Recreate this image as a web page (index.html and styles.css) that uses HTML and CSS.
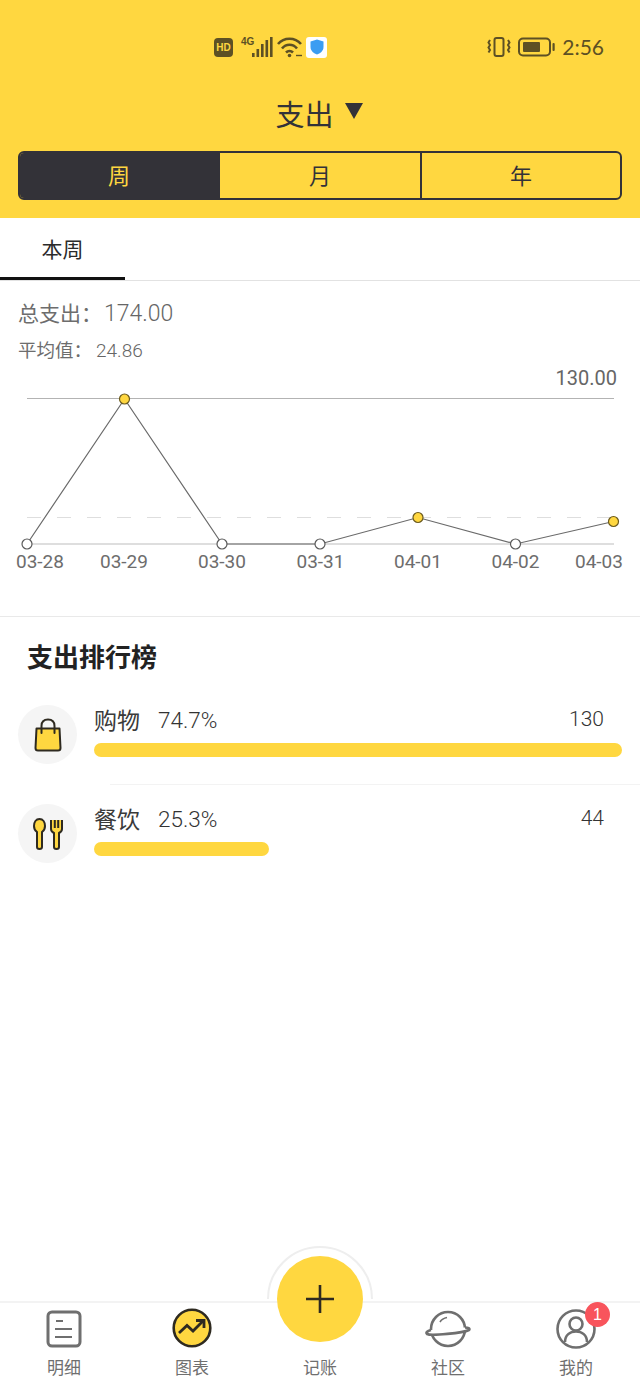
FILE: index.html
```html
<!DOCTYPE html>
<html lang="zh-CN">
<head>
  <meta charset="UTF-8" />
  <meta name="viewport" content="width=device-width, initial-scale=1.0"/>
  <title>支出</title>
  <link rel="stylesheet" href="styles.css">
</head>
<body>
  <header class="top">
    <div class="status">
      <div class="status-left">
        <span class="hd">HD</span>
        <svg class="signal" width="34" height="22" viewBox="0 0 34 22">
          <text x="1" y="9" class="net">4G</text>
          <rect x="12" y="17" width="2.600" height="4" fill="#5d5024"/>
          <rect x="16.500" y="13" width="2.600" height="8" fill="#5d5024"/>
          <rect x="21" y="8" width="2.600" height="13" fill="#5d5024"/>
          <rect x="25.500" y="4" width="2.600" height="17" fill="#5d5024"/>
          <rect x="30" y="1" width="2.600" height="20" fill="#5d5024"/>
        </svg>
        <svg width="26" height="22" viewBox="0 0 26 22" fill="none" stroke="#5d5024" stroke-width="2.600">
          <path d="M1 8C7 1 18 1 24 8"/>
          <path d="M5 12.500C9 7.500 16 7.500 20 12.500"/>
          <path d="M9 16.500C11 14.500 14 14.500 16 16.500"/>
          <circle cx="12.500" cy="19.500" r="1.800" fill="#5d5024" stroke="none"/>
          <path d="M19 19.500h6" stroke-width="1.400"/>
        </svg>
        <span class="shield-box">
          <svg width="14" height="16" viewBox="0 0 14 16"><path d="M7 0.500L13.500 2.500V8C13.500 12 10 14.500 7 15.500C4 14.500 .5 12 .5 8V2.500Z" fill="#3b9df2"/></svg>
        </span>
      </div>
      <div class="status-right">
        <svg width="24" height="20" viewBox="0 0 24 20" fill="none" stroke="#5d5024" stroke-width="2">
          <rect x="7.500" y="1" width="9" height="18" rx="2"/>
          <path d="M3 3L1.500 5.500L3 8L1.500 10.500L3 13L1.500 15.500"/>
          <path d="M21 3L22.500 5.500L21 8L22.500 10.500L21 13L22.500 15.500"/>
        </svg>
        <svg width="37" height="20" viewBox="0 0 37 20" fill="none">
          <rect x="1" y="1.500" width="31" height="17" rx="4" stroke="#5d5024" stroke-width="2"/>
          <rect x="5" y="5" width="17" height="10" rx="1" fill="#5d5024"/>
          <rect x="34.500" y="6" width="2.200" height="8" rx="1" fill="#5d5024"/>
        </svg>
        <span class="clock">2:56</span>
      </div>
    </div>
    <div class="title">
      <span>支出</span>
      <svg width="18" height="16" viewBox="0 0 18 16"><path d="M0 0H18L9 16Z" fill="#333238"/></svg>
    </div>
    <div class="seg">
      <div class="seg-item active">周</div>
      <div class="seg-item">月</div>
      <div class="seg-item">年</div>
    </div>
  </header>

  <main class="content">
    <div class="subtabs">
      <div class="subtab">本周</div>
    </div>

    <section class="stats">
      <div class="total">总支出：<span class="total-num">174.00</span></div>
      <div class="avg">平均值：<span class="avg-num">24.86</span></div>
    </section>

    <svg class="chart" width="640" height="210" viewBox="0 365 640 210">
      <text x="617" y="385" text-anchor="end" class="max-label">130.00</text>
      <line x1="27" y1="398.500" x2="614" y2="398.500" stroke="#b3b3b3"/>
      <line x1="27" y1="517.500" x2="614" y2="517.500" stroke="#dedede" stroke-dasharray="14 16"/>
      <line x1="27" y1="544" x2="614" y2="544" stroke="#bdbdbd"/>
      <polyline points="27,544 124.500,399 222,544 320,544 418,517.500 515.500,544 613.500,521.500" fill="none" stroke="#6a6a6a" stroke-width="1.200"/>
      <circle class="dot" cx="27" cy="544" r="5"/>
      <circle class="dot on" cx="124.500" cy="399" r="5"/>
      <circle class="dot" cx="222" cy="544" r="5"/>
      <circle class="dot" cx="320" cy="544" r="5"/>
      <circle class="dot on" cx="418" cy="517.500" r="5"/>
      <circle class="dot" cx="515.500" cy="544" r="5"/>
      <circle class="dot on" cx="613.500" cy="521.500" r="5"/>
      <text x="40" y="568" text-anchor="middle" class="day">03-28</text>
      <text x="124" y="568" text-anchor="middle" class="day">03-29</text>
      <text x="222" y="568" text-anchor="middle" class="day">03-30</text>
      <text x="320.500" y="568" text-anchor="middle" class="day">03-31</text>
      <text x="418" y="568" text-anchor="middle" class="day">04-01</text>
      <text x="515.500" y="568" text-anchor="middle" class="day">04-02</text>
      <text x="599" y="568" text-anchor="middle" class="day">04-03</text>
    </svg>

    <section class="rank">
      <h2>支出排行榜</h2>
      <div class="rank-row">
        <div class="rank-icon">
          <svg width="30" height="34" viewBox="0 0 30 34" fill="none" stroke="#2e2a20" stroke-width="2">
            <path d="M3.500 10.500H26.500L27.500 30C27.500 31.500 26.500 32.500 25 32.500H5C3.500 32.500 2.500 31.500 2.500 30Z" fill="#ffd740" stroke-linejoin="round"/>
            <path d="M8.500 15V8C8.500 4 11 1.500 15 1.500C19 1.500 21.500 4 21.500 8V15" stroke-linecap="round"/>
          </svg>
        </div>
        <div class="rank-body">
          <div class="rank-head">
            <span class="rank-name">购物</span>
            <span class="rank-pct">74.7%</span>
            <span class="rank-val">130</span>
          </div>
          <div class="bar bar-shop"></div>
        </div>
      </div>
      <div class="rank-row second">
        <div class="rank-icon">
          <svg width="32" height="32" viewBox="0 0 32 32" fill="none" stroke="#2e2a20" stroke-width="2">
            <path d="M7.500 1C11 1 13 4 13 8C13 11 11.500 13 10 14V29C10 30.500 9 31 7.500 31C6 31 5 30.500 5 29V14C3.500 13 2 11 2 8C2 4 4 1 7.500 1Z" fill="#ffd740"/>
            <path d="M19 2V11C19 13 20 14 22 15V29C22 30.500 23 31 24.500 31C26 31 27 30.500 27 29V15C29 14 30 13 30 11V2" fill="#ffd740"/>
            <path d="M22.800 2V10M26.200 2V10"/>
          </svg>
        </div>
        <div class="rank-body">
          <div class="rank-head">
            <span class="rank-name">餐饮</span>
            <span class="rank-pct">25.3%</span>
            <span class="rank-val">44</span>
          </div>
          <div class="bar bar-food"></div>
        </div>
      </div>
    </section>
  </main>

  <nav class="tabbar">
    <div class="tab">
      <svg width="36" height="38" viewBox="0 0 36 38" fill="none" stroke="#6f6f6f" stroke-width="3">
        <rect x="2" y="2" width="32" height="34" rx="4"/>
        <path d="M10 11H17M9 19H26M9 27H26" stroke-width="2.200"/>
      </svg>
      <span>明细</span>
    </div>
    <div class="tab">
      <svg class="chart-icon" width="40" height="40" viewBox="0 0 40 40" fill="none" stroke="#2e2a20" stroke-width="2.600">
        <circle cx="20" cy="20" r="18.300" fill="#ffd740"/>
        <path d="M7 25L15 17.500L21 23L31 13" stroke-width="2.800"/>
        <path d="M24 12.500H32V20" stroke-width="2.800"/>
      </svg>
      <span>图表</span>
    </div>
    <div class="tab tab-add">
      <span>记账</span>
    </div>
    <div class="tab">
      <svg width="46" height="38" viewBox="0 0 46 38" fill="none" stroke="#6f6f6f" stroke-width="2.600">
        <circle cx="23" cy="19" r="17"/>
        <path d="M6 20C2 21 0.500 23 2 24C6 26 38 23 44 20C45.500 18.500 43 17.500 40 17.500" fill="#fff"/>
        <path d="M15 12C16.500 9.500 19 8 22 7.500" stroke-width="1.600"/>
      </svg>
      <span>社区</span>
    </div>
    <div class="tab">
      <svg width="40" height="40" viewBox="0 0 40 40" fill="none" stroke="#6f6f6f" stroke-width="2.600">
        <circle cx="20" cy="20" r="18.500"/>
        <circle cx="20" cy="15" r="6.500"/>
        <path d="M9 33C9 26 14 22.500 20 22.500C26 22.500 31 26 31 33"/>
      </svg>
      <span>我的</span>
      <b class="badge">1</b>
    </div>
  </nav>

  <div class="fab-ring"></div>
  <div class="fab">
    <svg width="30" height="30" viewBox="0 0 30 30" stroke="#2e2a20" stroke-width="2.600"><path d="M15 1V29M1 15H29"/></svg>
  </div>
</body>
</html>
```

FILE: styles.css
```css
* { box-sizing: border-box; }
html, body { height: 100%; }
body {
  margin: 0;
  width: 640px;
  height: 1387px;
  position: relative;
  overflow: hidden;
  display: flex;
  flex-direction: column;
  background: #fff;
  font-family: "Noto Sans CJK SC", "Liberation Sans", sans-serif;
  color: #333238;
}
svg { display: block; flex: none; }

.top {
  height: 218px;
  background: #ffd740;
  padding: 34px 18px 0 18px;
}
.status {
  height: 26px;
  display: flex;
  align-items: center;
  justify-content: space-between;
  padding: 0 18px 0 196px;
}
.status-left, .status-right { display: flex; align-items: center; }
.status-left { gap: 3px; }
.status-right { gap: 7px; }
.hd {
  width: 19px;
  height: 19px;
  margin-right: 4px;
  border-radius: 4px;
  background: #5d5024;
  color: #ffd740;
  font: bold 10px/19px "Liberation Sans", sans-serif;
  text-align: center;
}
.net { font: bold 10px "Liberation Sans", sans-serif; fill: #5d5024; }
.shield-box {
  width: 21px;
  height: 21px;
  border-radius: 3px;
  background: #fff;
  display: flex;
  align-items: center;
  justify-content: center;
}
.clock {
  font: 21px/26px "Lato", "Liberation Sans", sans-serif;
  color: #5d5024;
}
.title {
  margin-top: 33px;
  height: 40px;
  padding-right: 2px;
  display: flex;
  align-items: center;
  justify-content: center;
  gap: 11px;
  font-size: 29px;
  line-height: 40px;
}
.title svg { margin-top: -4px; }
.seg {
  margin-top: 18px;
  height: 49px;
  display: grid;
  grid-template-columns: 198px 202px 1fr;
  border: 2px solid #333238;
  border-radius: 6px;
  overflow: hidden;
}
.seg-item {
  display: flex;
  align-items: center;
  justify-content: center;
  padding-bottom: 3px;
  font-size: 22px;
  border-left: 2px solid #333238;
}
.seg-item:first-child { border-left: none; }
.seg-item.active { background: #333238; color: #ffd740; }

.content { flex: 1; }
.subtabs {
  height: 63px;
  border-bottom: 1px solid #e2e2e2;
}
.subtab {
  width: 125px;
  height: 62px;
  border-bottom: 3px solid #111;
  text-align: center;
  font-size: 21px;
  line-height: 60px;
  color: #2b2b2b;
}
.stats {
  padding: 15px 18px 0 18px;
  height: 84px;
  color: #6d6d6d;
}
.total { font-size: 21px; line-height: 32px; }
.total-num { font: 300 23px/32px "Roboto", sans-serif; color: #666; margin-left: 2px; }
.avg { margin-top: 5px; font-size: 18.500px; line-height: 28px; }
.avg-num { font: 300 19px/28px "Roboto", sans-serif; color: #666; margin-left: 4px; }

.chart { height: 210px; }
.max-label { font: 20px "Roboto", sans-serif; fill: #666; }
.day { font: 19px "Roboto", sans-serif; fill: #6d6d6d; }
.dot { fill: #fff; stroke: #5a5a5a; stroke-width: 1.200; }
.dot.on { fill: #ffd740; stroke: #6b5a1e; }

.rank {
  margin-top: 41px;
  border-top: 1px solid #e9e9e9;
  padding: 20px 18px 0 18px;
}
.rank h2 {
  margin: 0 0 0 9px;
  font-size: 26px;
  line-height: 38px;
  font-weight: 700;
  color: #222;
}
.rank-row {
  margin-top: 30px;
  display: flex;
  gap: 17px;
  position: relative;
}
.rank-row.second { margin-top: 40px; }
.rank-row.second::before {
  content: "";
  position: absolute;
  left: 92px;
  right: -18px;
  top: -20px;
  height: 1px;
  background: #f3f3f3;
}
.rank-icon {
  width: 59px;
  height: 59px;
  border-radius: 50%;
  background: #f5f5f5;
  display: flex;
  align-items: center;
  justify-content: center;
  flex: none;
}
.rank-body { flex: 1; margin-top: -3px; }
.rank-head {
  display: flex;
  align-items: center;
  height: 34px;
  color: #333;
}
.rank-name { font-size: 23px; color: #3a3a3a; }
.rank-pct { margin: 2px 0 0 18px; font: 300 22.500px "Roboto", sans-serif; color: #333; }
.rank-val { margin-left: auto; margin-right: 18px; font: 300 21px "Roboto", sans-serif; color: #333; }
.bar {
  margin-top: 7px;
  height: 14px;
  border-radius: 7px;
  background: #ffd740;
}
.bar-food { width: 175px; }

.tabbar {
  height: 86px;
  border-top: 2px solid #f3f3f3;
  display: grid;
  grid-template-columns: 128px 128px 128px 128px 128px;
  background: #fff;
}
.tab {
  position: relative;
  display: flex;
  flex-direction: column;
  align-items: center;
  padding-top: 6px;
  font-size: 17px;
  color: #6f6f6f;
}
.tab svg { height: 40px; }
.tab .chart-icon { margin-top: -1px; }
.tab span { position: absolute; top: 52px; line-height: 24px; }
.badge {
  position: absolute;
  left: 73px;
  top: -1px;
  width: 25px;
  height: 25px;
  border-radius: 50%;
  background: #f8545c;
  color: #fff;
  font: 16px/25px "Liberation Sans", sans-serif;
  text-align: center;
}
.fab-ring {
  position: absolute;
  left: 267px;
  top: 1246px;
  width: 106px;
  height: 106px;
  border-radius: 50%;
  border: 2px solid #eeeeee;
  clip-path: inset(0 0 50% 0);
}
.fab {
  position: absolute;
  left: 277px;
  top: 1256px;
  width: 86px;
  height: 86px;
  border-radius: 50%;
  background: #ffd740;
  display: flex;
  align-items: center;
  justify-content: center;
}
```
